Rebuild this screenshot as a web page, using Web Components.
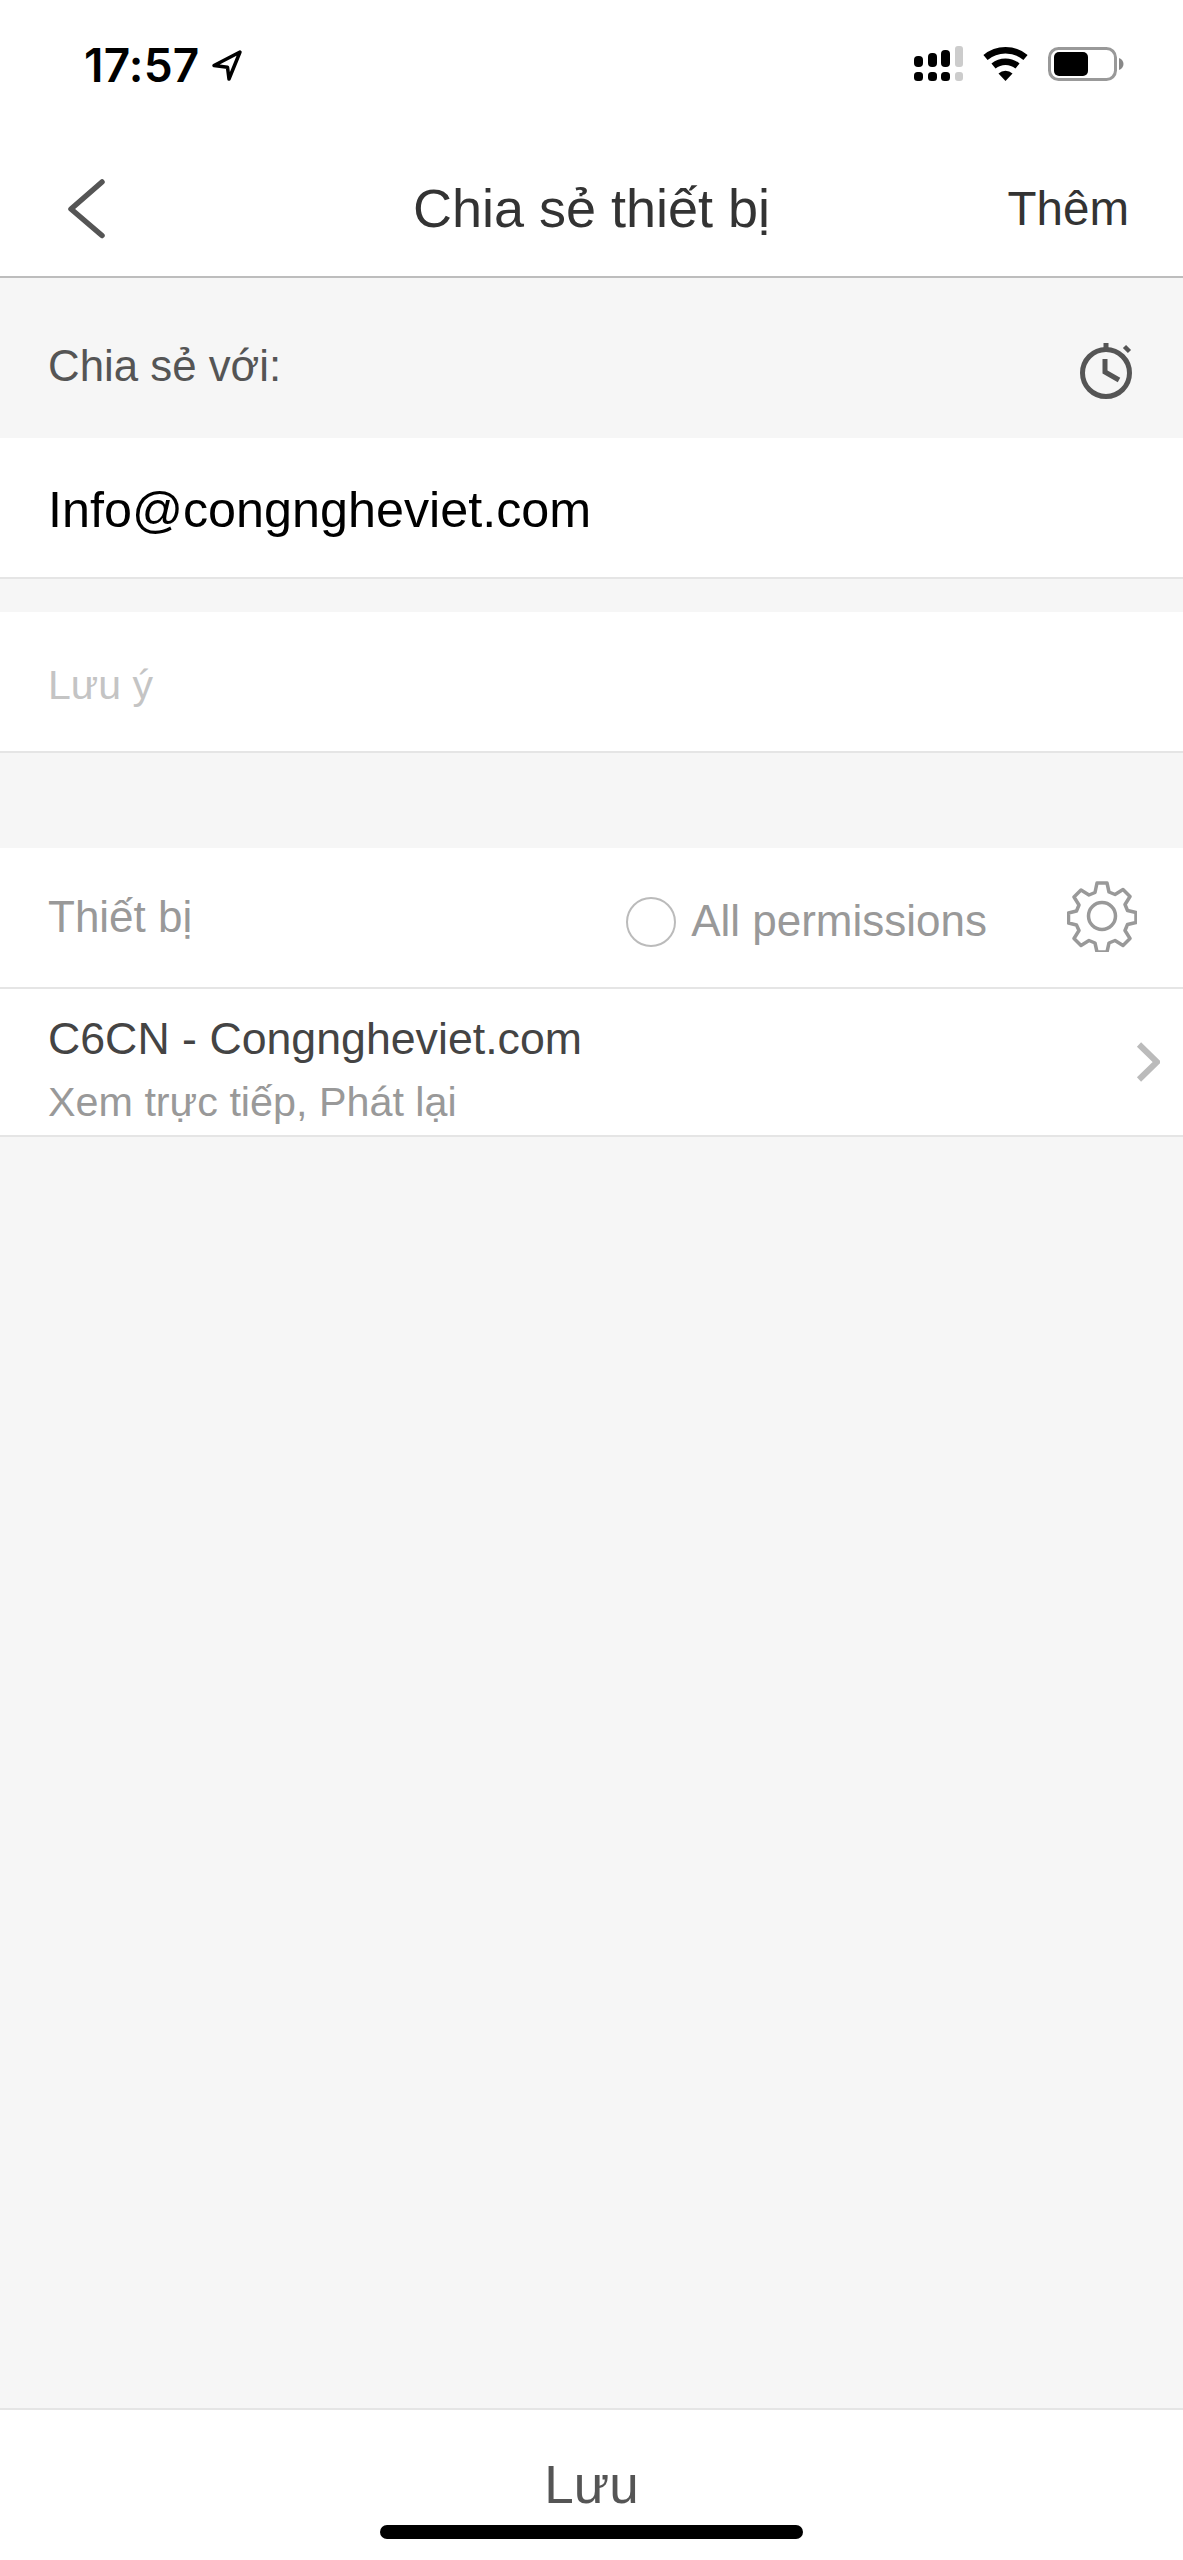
<!DOCTYPE html>
<html lang="vi">
<head>
<meta charset="utf-8">
<title>Chia sẻ thiết bị</title>
<style>
  html, body { margin: 0; padding: 0; background: #f6f6f6; }
</style>
</head>
<body>
<app-shell></app-shell>

<script>
const make = (html) => {
  const template = document.createElement('template');
  template.innerHTML = html;
  return template;
};

class Base extends HTMLElement {
  constructor() {
    super();
    this.attachShadow({ mode: 'open' });
    this.shadowRoot.appendChild(this.constructor.template.content.cloneNode(true));
  }
}

class StatusBar extends Base {
  static template = make(`
    <style>
      :host { display: flex; justify-content: space-between; height: 100px; background: #fff; }
      .left { display: flex; padding: 35px 0 0 84px; gap: 11px; font: 600 46px/60px Inter, "Liberation Sans", sans-serif; color: #000; letter-spacing: 0.2px; }
      .left svg { margin-top: 14px; }
      .right { padding: 46px 58px 0 0; }
      svg { display: block; }
    </style>
    <div class="left">
      <span>17:57</span>
      <svg width="32" height="32" viewBox="0 0 32 32"><path d="M29 3 3 16.500l13.500 1.800L18 30z" fill="none" stroke="#000" stroke-width="3.500" stroke-linejoin="round"/></svg>
    </div>
    <div class="right">
      <svg width="211" height="36" viewBox="0 0 211 36">
        <g fill="#000">
          <rect x="0" y="10" width="9" height="11" rx="4"/><rect x="14" y="7" width="9" height="14" rx="4"/><rect x="27" y="4" width="9" height="17" rx="4"/>
          <rect x="0" y="26" width="9" height="9" rx="3.500"/><rect x="14" y="26" width="9" height="9" rx="3.500"/><rect x="27" y="26" width="9" height="9" rx="3.500"/>
        </g>
        <g fill="#ccc"><rect x="41" y="0" width="8" height="21" rx="3"/><rect x="41" y="26" width="8" height="9" rx="3"/></g>
        <g fill="none" stroke="#000" stroke-width="6.500">
          <path d="M71.500 11.500a31 31 0 0 1 40 0"/>
          <path d="M79.500 20a19 19 0 0 1 24 0"/>
        </g>
        <path d="M91.500 35 84.500 27.500a10.500 10.500 0 0 1 14 0z" fill="#000"/>
        <rect x="135.500" y="2.500" width="66" height="31" rx="9" fill="none" stroke="#999" stroke-width="3"/>
        <rect x="140" y="6" width="34" height="24" rx="5" fill="#000"/>
        <path d="M205 12c3 1 4.500 3.500 4.500 6s-1.500 5-4.500 6z" fill="#888"/>
      </svg>
    </div>
  `);
}

class NavHeader extends Base {
  static template = make(`
    <style>
      :host { display: grid; grid-template-columns: 1fr auto 1fr; align-items: center; height: 134px; padding-top: 42px; background: #fff; border-bottom: 2px solid #bdbdbd; color: #333; }
      svg { display: block; margin-left: 66px; }
      .title { font-size: 54px; line-height: 60px; margin-top: -2px; }
      .action { justify-self: end; font-size: 47.500px; line-height: 60px; padding-right: 54px; }
    </style>
    <svg width="40" height="60" viewBox="0 0 40 60"><path d="M36 3 5 30l31 26.500" fill="none" stroke="#555" stroke-width="5.500" stroke-linecap="round" stroke-linejoin="round"/></svg>
    <div class="title"><slot></slot></div>
    <div class="action"><slot name="action"></slot></div>
  `);
}

class ShareLabel extends Base {
  static template = make(`
    <style>
      :host { display: flex; justify-content: space-between; height: 160px; box-sizing: border-box; padding: 58px 47px 0 48px; color: #555; font-size: 43.800px; line-height: 60px; }
      svg { display: block; margin-top: 6px; }
    </style>
    <div><slot></slot></div>
    <svg width="60" height="60" viewBox="0 0 60 60" fill="none" stroke="#555" stroke-width="5">
      <circle cx="30" cy="31" r="23.500"/>
      <path d="M30 1v7"/>
      <path d="M48.500 4.500l5 5" stroke-width="4.500"/>
      <path d="M29 17v13l14 8" stroke-linejoin="miter"/>
    </svg>
  `);
}

class TextRow extends Base {
  static template = make(`
    <style>
      :host { display: block; background: #fff; box-sizing: border-box; height: 141px; padding: 42px 48px 0; border-bottom: 2px solid #e5e5e5; font-size: 50.300px; line-height: 60px; color: #000; }
      :host([placeholder]) { padding-top: 43px; font-size: 41px; color: #c4c4c4; height: 141px; margin-top: 33px; }
    </style>
    <slot></slot>
  `);
}

class DeviceHeader extends Base {
  static template = make(`
    <style>
      :host { display: flex; background: #fff; box-sizing: border-box; height: 141px; margin-top: 95px; padding: 39px 46px 0 48px; border-bottom: 2px solid #e5e5e5; color: #999; font-size: 44px; line-height: 60px; }
      .name { flex: 1; }
      .check { width: 46px; height: 46px; border: 2px solid #bbb; border-radius: 50%; margin: 10px 15px 0 0; }
      .all { font-size: 44px; margin-top: 4px; margin-right: 80px; }
      svg { display: block; margin-top: -7px; }
    </style>
    <div class="name"><slot></slot></div>
    <div class="check"></div>
    <div class="all"><slot name="all"></slot></div>
    <svg width="70" height="72" viewBox="0 0 70 72" fill="none" stroke="#999" stroke-width="3.500" stroke-linejoin="round">
      <circle cx="35" cy="36" r="13.500"/>
      <path d="M30 3h10l2 9 6 2.500 8-5 7 7-5 8 2.500 6 8.500 2v10l-8.500 2-2.500 6 5 8-7 7-8-5-6 2.500-2 9H30l-2-9-6-2.500-8 5-7-7 5-8L9.500 45 1.500 43V33l8-2 2.500-6-5-8 7-7 8 5 6-2.500z"/>
    </svg>
  `);
}

class DeviceRow extends Base {
  static template = make(`
    <style>
      :host { display: flex; justify-content: space-between; background: #fff; box-sizing: border-box; height: 148px; padding: 0 23px 0 48px; border-bottom: 2px solid #e5e5e5; overflow: hidden; }
      .name { font-size: 44.700px; line-height: 50px; color: #444; margin-top: 25px; }
      .sub { font-size: 41.300px; line-height: 50px; color: #999; margin-top: 13px; }
      svg { display: block; margin-top: 53px; }
    </style>
    <div>
      <div class="name"><slot></slot></div>
      <div class="sub"><slot name="sub"></slot></div>
    </div>
    <svg width="24" height="40" viewBox="0 0 24 40"><path d="M3 2.500 21 20 3 37.500" fill="none" stroke="#bbb" stroke-width="6"/></svg>
  `);
}

class SaveFooter extends Base {
  static template = make(`
    <style>
      :host { display: block; position: relative; background: #fff; border-top: 2px solid #e5e5e5; height: 152px; box-sizing: border-box; padding-top: 40px; text-align: center; font-size: 53px; line-height: 70px; color: #555; }
      .home { position: absolute; left: 380px; top: 115px; width: 423px; height: 14px; border-radius: 7px; background: #000; }
    </style>
    <slot></slot>
    <div class="home"></div>
  `);
}

class AppShell extends Base {
  static template = make(`
    <style>
      :host { display: flex; flex-direction: column; width: 1183px; height: 2560px; background: #f6f6f6; font-family: "Liberation Sans", Arial, sans-serif; }
      .fill { flex: 1; }
    </style>
    <status-bar></status-bar>
    <nav-header>Chia sẻ thiết bị<span slot="action">Thêm</span></nav-header>
    <share-label>Chia sẻ với:</share-label>
    <text-row>Info@congngheviet.com</text-row>
    <text-row placeholder>Lưu ý</text-row>
    <device-header>Thiết bị<span slot="all">All permissions</span></device-header>
    <device-row>C6CN - Congngheviet.com<span slot="sub">Xem trực tiếp, Phát lại</span></device-row>
    <div class="fill"></div>
    <save-footer>Lưu</save-footer>
  `);
}

customElements.define('status-bar', StatusBar);
customElements.define('nav-header', NavHeader);
customElements.define('share-label', ShareLabel);
customElements.define('text-row', TextRow);
customElements.define('device-header', DeviceHeader);
customElements.define('device-row', DeviceRow);
customElements.define('save-footer', SaveFooter);
customElements.define('app-shell', AppShell);
</script>
</body>
</html>
